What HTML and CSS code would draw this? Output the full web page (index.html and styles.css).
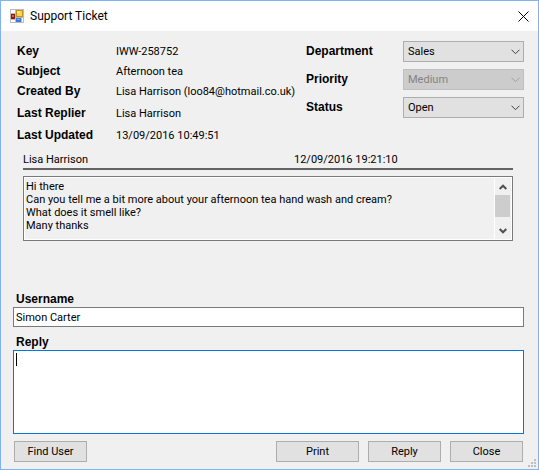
FILE: index.html
```html
<!DOCTYPE html>
<html lang="en">
<head>
<meta charset="utf-8">
<title>Support Ticket</title>
<link rel="stylesheet" href="styles.css">
</head>
<body>
<main class="window">
  <header class="titlebar">
    <svg class="app-icon" width="14" height="14" viewBox="0 0 14 14" shape-rendering="crispEdges" aria-hidden="true">
      <path fill="#bdbdbd" d="M0 0h14v14H0z"/>
      <path fill="#fff" d="M1 1h4v3H1zM1 11h4v2H1zM12 9h1v4h-1z"/>
      <path fill="#8c1a12" d="M1 5h4v5H1z"/>
      <path fill="#d9624f" d="M2 6h2v2H2z"/>
      <path fill="#c98f12" d="M6 1h7v7H6z"/>
      <path fill="#ffd257" d="M7 2h5v5H7z"/>
      <path fill="#ffe99a" d="M7 2h3v2H7z"/>
      <path fill="#3c78d8" d="M6 9h5v4H6z"/>
      <path fill="#83b0f5" d="M7 10h3v1H7z"/>
    </svg>
    <h1 class="title">Support Ticket</h1>
    <button class="window-close" type="button" aria-label="Close window">
      <svg width="11" height="11" viewBox="0 0 11 11" aria-hidden="true"><path d="M.5 .5l10 10M10.5 .5l-10 10" stroke="#000"/></svg>
    </button>
  </header>

  <form class="content">
    <section class="summary">
      <dl class="details">
        <dt>Key</dt><dd>IWW-258752</dd>
        <dt>Subject</dt><dd>Afternoon tea</dd>
        <dt>Created By</dt><dd>Lisa Harrison (loo84@hotmail.co.uk)</dd>
        <dt>Last Replier</dt><dd>Lisa Harrison</dd>
        <dt>Last Updated</dt><dd>13/09/2016 10:49:51</dd>
      </dl>
      <div class="options">
        <label for="department">Department</label>
        <div class="picker">
          <select id="department"><option>Sales</option></select>
          <svg class="chevron" width="9" height="6" viewBox="0 0 9 6" aria-hidden="true"><path d="M.5 .7l4 4 4-4"/></svg>
        </div>
        <label for="priority">Priority</label>
        <div class="picker">
          <select id="priority" disabled><option>Medium</option></select>
          <svg class="chevron" width="9" height="6" viewBox="0 0 9 6" aria-hidden="true"><path d="M.5 .7l4 4 4-4"/></svg>
        </div>
        <label for="status">Status</label>
        <div class="picker">
          <select id="status"><option>Open</option></select>
          <svg class="chevron" width="9" height="6" viewBox="0 0 9 6" aria-hidden="true"><path d="M.5 .7l4 4 4-4"/></svg>
        </div>
      </div>
    </section>

    <article class="message">
      <header class="message-head"><span>Lisa Harrison</span><time>12/09/2016 19:21:10</time></header>
      <div class="message-box">
        <textarea class="message-text" aria-label="Message" readonly>Hi there
Can you tell me a bit more about your afternoon tea hand wash and cream?
What does it smell like?
Many thanks</textarea>
        <div class="scrollbar" aria-hidden="true">
          <svg width="8" height="6" viewBox="0 0 8 6"><path d="M.7 5L4 1.7 7.3 5"/></svg>
          <div class="track"><div class="thumb"></div></div>
          <svg width="8" height="6" viewBox="0 0 8 6"><path d="M.7 1L4 4.3 7.3 1"/></svg>
        </div>
      </div>
    </article>

    <section class="compose">
      <label for="username">Username</label>
      <input id="username" type="text" value="Simon Carter">
      <label for="reply">Reply</label>
      <div class="reply-box">
        <textarea id="reply"></textarea>
        <span class="caret" aria-hidden="true"></span>
      </div>
    </section>

    <footer class="actions">
      <button class="find" type="button">Find User</button>
      <button class="print" type="button">Print</button>
      <button type="button">Reply</button>
      <button type="button">Close</button>
    </footer>
  </form>
  <svg class="grip" width="8" height="8" viewBox="0 0 8 8" shape-rendering="crispEdges" aria-hidden="true">
    <path fill="#bfbfbf" d="M6 0h2v2H6zM3 3h2v2H3zM6 3h2v2H6zM0 6h2v2H0zM3 6h2v2H3zM6 6h2v2H6z"/>
  </svg>
</main>
</body>
</html>
```
FILE: styles.css
```css
* { box-sizing: border-box; }

body {
  margin: 0;
  background: #f0f0f0;
  color: #000;
  font: 11px/13px Roboto, "Liberation Sans", sans-serif;
}

.window {
  position: relative;
  display: flex;
  flex-direction: column;
  min-height: 100vh;
  border: 1px solid #7eb4f2;
}

.titlebar {
  display: flex;
  align-items: center;
  height: 30px;
  padding: 0 9px;
  background: #fff;
}

.title {
  flex: 1;
  margin: 0 0 0 6px;
  font: 12px/16px Roboto, sans-serif;
}

.window-close {
  display: flex;
  padding: 0;
  border: 0;
  background: none;
}

.content {
  display: flex;
  flex: 1;
  flex-direction: column;
  padding: 10px 14px 7px 12px;
}

.summary {
  display: flex;
  justify-content: space-between;
}

.details {
  display: grid;
  grid-template-columns: 99px auto;
  grid-template-rows: 20px 20px 20px 24px 20px;
  align-items: center;
  margin: 0;
  padding-left: 4px;
}

dd { margin: 0; white-space: nowrap; }

dt, label {
  font-family: "Liberation Sans", Arial, sans-serif;
  font-size: 12px;
  font-weight: 700;
}

.options {
  display: grid;
  grid-template-columns: 97px 121px;
  grid-auto-rows: 21px;
  row-gap: 7px;
  align-items: center;
  align-content: start;
}

.picker { position: relative; }

select, input, textarea, .actions button {
  display: block;
  margin: 0;
  border-radius: 0;
  outline: 0;
  color: inherit;
  font: inherit;
}

select {
  appearance: none;
  width: 100%;
  height: 21px;
  padding: 0 20px 0 4px;
  border: 1px solid #adadad;
  background: #e1e1e1;
}

select:disabled {
  border-color: #bfbfbf;
  background: #ccc;
  color: #838383;
  opacity: 1;
}

.chevron {
  position: absolute;
  top: 8px;
  right: 4px;
  fill: none;
  stroke: #404040;
  pointer-events: none;
}

select:disabled + .chevron { stroke: #a0a0a0; }

.message { padding: 5px 11px 0 10px; }

.message-head {
  display: grid;
  grid-template-columns: 271px auto;
  align-items: center;
  height: 20px;
  border-bottom: 2px solid #646464;
}

.message-box {
  display: flex;
  height: 65px;
  margin-top: 6px;
  padding: 1px;
  border: 1px solid #7a7a7a;
  box-shadow: inset 0 0 0 1px #fff;
}

.message-text {
  flex: 1;
  padding: 2px 1px;
  border: 0;
  background: none;
  resize: none;
  overflow: hidden;
}

.scrollbar {
  display: flex;
  flex-direction: column;
  align-items: center;
  width: 17px;
  padding: 6px 1px 5px 0;
  border-left: 1px solid #fff;
}

.scrollbar svg {
  flex: none;
  fill: none;
  stroke: #505050;
  stroke-width: 2;
}

.track {
  flex: 1;
  align-self: stretch;
  padding-top: 5px;
}

.thumb {
  height: 22px;
  background: #cdcdcd;
}

.compose {
  display: flex;
  flex: 1;
  flex-direction: column;
  padding-top: 50px;
}

.compose label {
  height: 16px;
  padding-left: 3px;
  line-height: 16px;
}

input {
  width: 100%;
  height: 20px;
  margin-bottom: 7px;
  padding: 0 2px;
  border: 1px solid #7a7a7a;
  background: #fff;
}

.reply-box {
  position: relative;
  display: flex;
  flex: 1;
  min-height: 84px;
}

#reply {
  flex: 1;
  padding: 2px;
  border: 1px solid #0078d7;
  background: #fff;
  resize: none;
}

.caret {
  position: absolute;
  top: 3px;
  left: 3px;
  width: 1px;
  height: 13px;
  background: #000;
}

#reply:focus + .caret { display: none; }

.actions {
  display: flex;
  gap: 9px;
  padding: 7px 1px 0;
}

.actions button {
  width: 73px;
  height: 21px;
  padding: 0;
  border: 1px solid #adadad;
  background: #e1e1e1;
}

.actions .find { margin-right: auto; }
.actions .print { width: 83px; }

.grip {
  position: absolute;
  right: 2px;
  bottom: 2px;
}
```
